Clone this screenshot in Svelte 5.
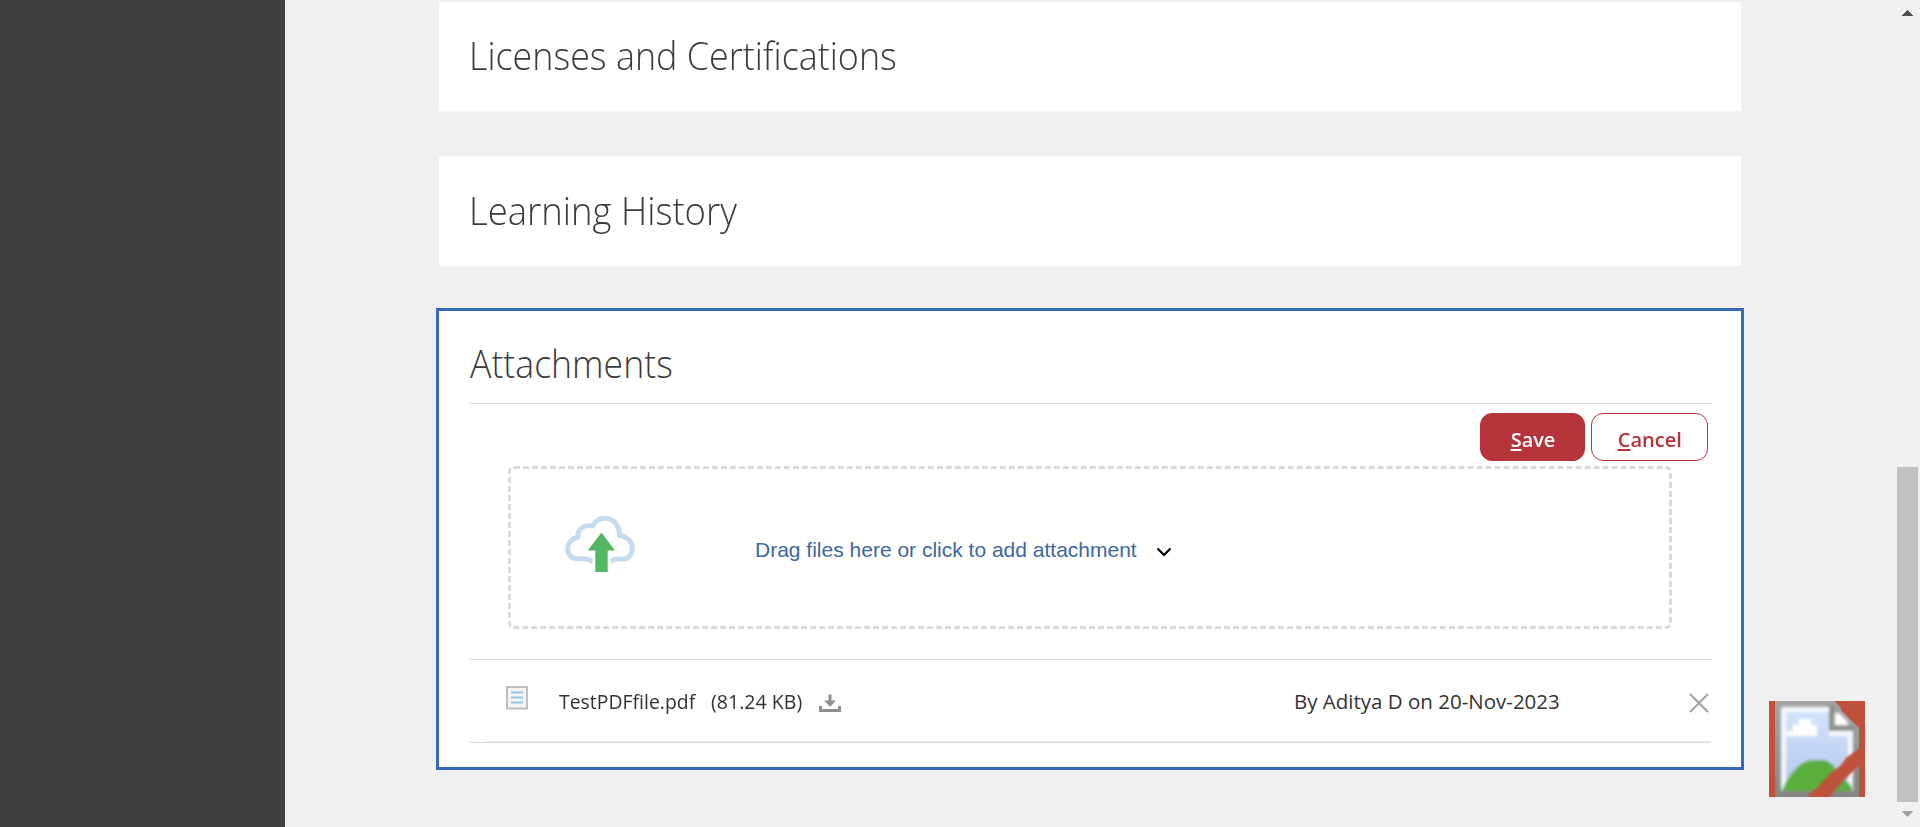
<script>
  const sections = [
    { title: 'Licenses and Certifications', cls: 'licenses' },
    { title: 'Learning History', cls: 'learning' }
  ];
  const file = { name: 'TestPDFfile.pdf', size: '(81.24 KB)', by: 'By Aditya D on 20-Nov-2023' };
</script>

<div class="page">
  <aside class="sidebar"></aside>
  <main class="content">
    {#each sections as s}
      <section class="card {s.cls}"><h2><span>{s.title}</span></h2></section>
    {/each}
    <section class="card active">
      <h2 class="attach"><span>Attachments</span></h2>
      <div class="actions">
        <button class="btn save"><span><u>S</u>ave</span></button>
        <button class="btn cancel"><span><u>C</u>ancel</span></button>
      </div>
      <div class="drop">
        <svg class="cloud" width="72" height="60" viewBox="0 0 72 60">
          <path d="M27.500 46.500C24.500 45.500 23 43.700 19.500 43.700H13C6.500 43.700 2.700 39.500 2.700 34C2.700 28 7 23.500 12.700 22.300C12.200 14.500 18 9.500 28 10.700C30.500 5.500 34.500 3.200 39.500 3.200C48.500 3.200 54.800 10.500 54.500 20.300C62.500 22 67.300 27 67.300 33.500C67.300 40 63 44 57.500 44H52C49 44 47.500 45.500 45.700 46.500" fill="none" stroke="#c5dbf0" stroke-width="5" />
          <path d="M36.400 17.500L50 35.500H42.700V57H30.300V35.500H22.800Z" fill="#52b760" />
        </svg>
        <span class="prompt">Drag files here or click to add attachment</span>
        <svg class="chev" width="16" height="11" viewBox="0 0 16 11"><path d="M1.500 1.500L8 8L14.500 1.500" fill="none" stroke="#000" stroke-width="2.200" /></svg>
      </div>
      <div class="row">
        <svg class="doc" width="22" height="24" viewBox="0 0 22 24">
          <rect x="1" y="1" width="20" height="21.500" fill="#f4f4f4" stroke="#b9bbbb" stroke-width="1.800" />
          <path d="M5 6.500H17M5 11.500H17M5 16.500H17" stroke="#94c5ea" stroke-width="1.800" />
        </svg>
        <span class="name"><b>{file.name}</b></span>
        <span class="size"><b>{file.size}</b></span>
        <svg class="download" width="22" height="19" viewBox="0 0 22 19">
          <path d="M9.500 0.500H12.500V6.500H17L11 12.800L5 6.500H9.500Z" fill="#8b9094" />
          <path d="M1.500 12V16.500H20.500V12" fill="none" stroke="#8b9094" stroke-width="3" />
        </svg>
        <span class="by">{file.by}</span>
        <svg class="remove" width="20" height="20" viewBox="0 0 20 20"><path d="M1 1L19 19M19 1L1 19" stroke="#a3a7a9" stroke-width="2.200" /></svg>
      </div>
    </section>
  </main>
  <div class="scroll">
    <svg width="12" height="6" viewBox="0 0 12 6" shape-rendering="crispEdges"><path d="M0 6L5.500 0L11 6Z" fill="#505050" /></svg>
    <div class="thumb"></div>
    <svg width="12" height="6" viewBox="0 0 12 6" shape-rendering="crispEdges"><path d="M0 0H11L5.500 6Z" fill="#a3a3a3" /></svg>
  </div>

  <div class="badge">
    <svg width="96" height="96" viewBox="0 0 96 96">
      <defs>
        <linearGradient id="sky" x1="0" y1="0" x2="0" y2="1"><stop offset="0" stop-color="#d2e2fa" /><stop offset="1" stop-color="#b5c8ed" /></linearGradient>
        <linearGradient id="edge" x1="0" y1="0" x2="0" y2="1"><stop offset="0" stop-color="#a5a5a5" /><stop offset="1" stop-color="#858585" /></linearGradient>
        <filter id="soft" x="-10%" y="-10%" width="120%" height="120%"><feGaussianBlur stdDeviation="1.600" /></filter>
        <filter id="slight" x="-10%" y="-10%" width="120%" height="120%"><feGaussianBlur stdDeviation="1.200" /></filter>
      </defs>
      <rect width="96" height="96" fill="#c0513c" />
      <path d="M6 0H66L72 6V9L90 27V96H6Z" fill="url(#edge)" />
      <g filter="url(#soft)">
        <path d="M12 6H60V30H84V90H12Z" fill="#f5f9ff" />
        <path d="M17 11H60V35H79V87H17Z" fill="url(#sky)" />
        <path d="M18 35V30H24V24H30V18H42V24H48V35Z" fill="#fff" />
        <path d="M62.500 4V27.500H87" fill="none" stroke="#8e8e8e" stroke-width="5" />
        <path d="M66 12H70L79 21V24H66Z" fill="#fff" />
        <path d="M13 90Q17 78 24 71Q33 59 45 59H53Q61 59 67 68L83 86V90Z" fill="#5aae3a" />
      </g>
      <g filter="url(#slight)">
        <path d="M64 -4H100V26L90 24L84 19L78 13L72 7Z" fill="#c0513c" />
        <path d="M100 42L90 48L78 56L72 64L60 74L48 87L40 93V100H58L66 89L78 76L90 65L100 56Z" fill="#c0513c" />
      </g>
      <path d="M0 0H6V96H0ZM90 0H96V96H90Z" fill="#c0513c" />
    </svg>
  </div>
</div>

<style>
  :global(body) { margin: 0; overflow: hidden; }
  .page { position: relative; display: flex; height: 827px; background: #f0f0f0; font-family: "Open Sans", sans-serif; color: #333; overflow: hidden; }
  .sidebar { width: 285px; flex: none; background: #404040; }
  .content { flex: 1; padding: 2px 0 0 151px; }
  .card { box-sizing: border-box; width: 1302px; margin-left: 3px; padding-left: 30px; background: #fff; }
  .licenses { height: 109px; margin-bottom: 45px; }
  .learning { height: 110px; margin-bottom: 42px; }
  h2 { margin: 0; font-size: 39px; font-weight: 300; line-height: 60px; color: #3b3b3b; white-space: nowrap; }
  h2 span, .name b, .size b { display: inline-block; transform-origin: 0 50%; font-weight: inherit; }
  .licenses h2 { padding-top: 23px; }
  .licenses span { transform: scaleX(0.92); }
  .learning h2 { padding-top: 24px; }
  .learning span { transform: scaleX(0.935); }
  .active { width: 1308px; height: 462px; margin-left: 0; border: 3px solid #376ab7; padding: 22px 30px 0; }
  .attach { height: 70px; border-bottom: 1px solid #d5dce2; }
  .attach span { transform: translateX(1px) scaleX(0.914); }
  .actions { display: flex; justify-content: flex-end; gap: 6px; padding: 9px 3px 0 0; height: 53px; }
  .btn { box-sizing: border-box; height: 48px; border-radius: 12px; border: 1px solid #b53439; padding: 3px 0 0; font: 400 20.500px/38px "Open Sans", sans-serif; text-align: center; white-space: nowrap; }
  .btn span { display: inline-block; }
  .btn u { text-decoration-thickness: 2px; text-underline-offset: 2px; text-decoration-skip-ink: none; }
  .save { width: 105px; background: #b53439; color: #fff; font-weight: 650; }
  .save span { transform: scaleX(0.97); }
  .cancel { width: 117px; background: #fff; color: #b53439; font-weight: 550; }
  .cancel span { transform: scaleX(0.98); }
  .drop { box-sizing: border-box; width: 1164px; height: 163px; margin-left: 39px; border: 3px dashed #d9d9d9; border-radius: 6px; display: flex; align-items: flex-start; }
  .cloud { margin: 46px 0 0 54px; }
  .prompt { width: 382px; margin: 67px 0 0 118px; font: 21px/28px "Liberation Sans", sans-serif; color: #3d68a0; white-space: nowrap; }
  .chev { margin: 78px 0 0 19px; }
  .row { display: flex; align-items: flex-start; height: 82px; margin-top: 30px; border-top: 1px solid #d5dade; border-bottom: 1px solid #d5dade; font-size: 20.500px; line-height: 28px; white-space: nowrap; background: linear-gradient(#eceef0, #eceef0) 15px 100% / 100% 1px no-repeat; }
  .doc { margin: 26px 0 0 37px; }
  .name { width: 152px; margin: 27px 0 0 31px; }
  .name b { transform: scaleX(0.947); }
  .size { width: 92px; margin-top: 27px; }
  .size b { transform: scaleX(0.955); }
  .download { margin: 34px 0 0 16px; }
  .by { width: 264px; margin: 27px 0 0 453px; }
  .remove { margin: 33px 0 0 131px; }
  .row svg, .drop svg { flex: none; display: block; }
  .row span, .drop span { flex: none; }
  .scroll { width: 23px; display: flex; flex-direction: column; flex: none; padding-top: 10px; background: #f1f1f1; box-sizing: border-box; }
  .scroll svg { margin-left: 5px; display: block; flex: none; }
  .thumb { width: 21px; height: 335px; margin: 451px 0 9px; background: #c1c1c1; flex: none; }
  .badge { position: absolute; left: 1769px; top: 701px; width: 96px; height: 96px; overflow: hidden; }
  .badge svg { display: block; }
</style>
